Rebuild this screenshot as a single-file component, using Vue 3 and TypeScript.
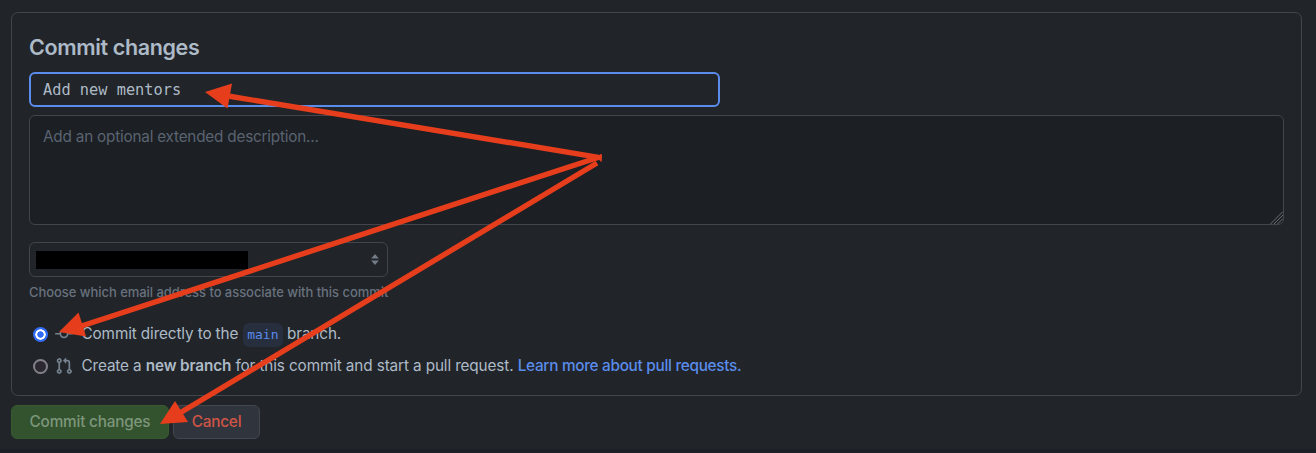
<script setup lang="ts">
import { ref } from 'vue'

interface Arrow {
  line: [number, number, number, number]
  head: string
}

const message = ref<string>('Add new mentors')
const description = ref<string>('')
const target = ref<string>('direct')

const arrows: Arrow[] = [
  { line: [601.5, 157.8, 228, 96], head: '205,92 232,83.5 227.5,108.5' },
  { line: [598, 157.5, 80, 326.5], head: '59,332 78.5,312.5 86,336.5' },
  { line: [597, 163, 179, 413.5], head: '160,424 175,401 188,422' },
]
</script>

<template>
  <main class="page">
    <section class="panel">
      <h3 class="title">Commit changes</h3>
      <input v-model="message" class="summary" type="text" spellcheck="false" />
      <div class="field">
        <textarea
          v-model="description"
          class="description"
          placeholder="Add an optional extended description..."
        ></textarea>
        <svg class="grip" viewBox="0 0 13 13" width="13" height="13">
          <path d="M.5 13 13 .5M4 13l9-9M7.5 13 13 7.5M11 13l2-2" stroke="#77797c" stroke-width=".9" />
        </svg>
      </div>
      <div class="email">
        <span class="redacted"></span>
        <svg class="sorter" viewBox="0 0 8 11" width="8" height="11">
          <path d="M4 0 7.9 4.6H.1zM4 11 .1 6.4h7.8z" fill="#717a87" />
        </svg>
      </div>
      <p class="note">Choose which email address to associate with this commit</p>
      <label class="choice first">
        <input v-model="target" type="radio" value="direct" name="target" />
        <svg class="icon" viewBox="0 0 16 16" width="18" height="18" fill="#768390">
          <path
            fill-rule="evenodd"
            d="M10.5 7.75a2.5 2.5 0 1 1-5 0 2.5 2.5 0 0 1 5 0zm1.43.75a4.002 4.002 0 0 1-7.86 0H.75a.75.75 0 1 1 0-1.5h3.32a4.001 4.001 0 0 1 7.86 0h3.32a.75.75 0 1 1 0 1.5z"
          />
        </svg>
        <span>Commit directly to the <code>main</code> branch.</span>
      </label>
      <label class="choice second">
        <input v-model="target" type="radio" value="pull" name="target" />
        <svg class="icon" viewBox="0 0 16 16" width="18" height="18" fill="#768390">
          <path
            fill-rule="evenodd"
            d="M7.177 3.073 9.573.677A.25.25 0 0 1 10 .854v4.792a.25.25 0 0 1-.427.177L7.177 3.427a.25.25 0 0 1 0-.354zM3.75 2.5a.75.75 0 1 0 0 1.5.75.75 0 0 0 0-1.5zm-2.25.75a2.25 2.25 0 1 1 3 2.122v5.256a2.251 2.251 0 1 1-1.5 0V5.372A2.25 2.25 0 0 1 1.5 3.25zM11 2.5h-1V4h1a1 1 0 0 1 1 1v5.628a2.251 2.251 0 1 0 1.5 0V5A2.5 2.5 0 0 0 11 2.5zm1 10.25a.75.75 0 1 1 1.5 0 .75.75 0 0 1-1.5 0zM3.75 12a.75.75 0 1 0 0 1.5.75.75 0 0 0 0-1.5z"
          />
        </svg>
        <span>Create a <b>new branch</b> for this commit and start a pull request. <a>Learn more about pull requests.</a></span>
      </label>
    </section>
    <div class="actions">
      <button class="commit" type="button">Commit changes</button>
      <button class="cancel" type="button">Cancel</button>
    </div>
    <svg class="arrows" viewBox="0 0 1316 453" width="1316" height="453">
      <g v-for="arrow in arrows" :key="arrow.head" fill="#e63e1c" stroke="#e63e1c">
        <line
          :x1="arrow.line[0]"
          :y1="arrow.line[1]"
          :x2="arrow.line[2]"
          :y2="arrow.line[3]"
          stroke-width="5.4"
        />
        <polygon :points="arrow.head" stroke="none" />
      </g>
      <path d="M601 154v7.5" stroke="#e63e1c" stroke-width="1.6" />
    </svg>
  </main>
</template>

<style>
body {
  background: #212428;
}
</style>

<style scoped>
* {
  box-sizing: border-box;
}
.page {
  position: relative;
  width: 1316px;
  height: 453px;
  padding: 12px 14px 0 11px;
  overflow: hidden;
  background: #212428;
  border-bottom: 4px solid #1e2027;
  color: #adbac7;
  font-family: Inter, 'Liberation Sans', sans-serif;
}
.panel {
  display: flex;
  flex-direction: column;
  align-items: flex-start;
  width: 1291px;
  height: 384px;
  padding: 0 17px;
  border: 1px solid #42464c;
  border-radius: 7px;
}
.title {
  height: 59px;
  margin: 0;
  padding-top: 20px;
  font-size: 21.5px;
  font-weight: 600;
  letter-spacing: -0.36px;
  line-height: 28px;
}
.summary {
  width: 691px;
  height: 35px;
  padding: 0 12px;
  border: 2px solid #5a8cec;
  border-radius: 6px;
  outline: none;
  background: #212428;
  color: #adbac7;
  font: 15.3px 'DejaVu Sans Mono', monospace;
}
.field {
  position: relative;
  flex: none;
  height: 110px;
  margin-top: 8px;
}
.description {
  display: block;
  width: 1255px;
  height: 110px;
  padding: 10px 13px;
  border: 1px solid #42464c;
  border-radius: 6px;
  outline: none;
  resize: none;
  background: #1c1f23;
  font: 15.3px/22px Inter, sans-serif;
  letter-spacing: -0.21px;
}
.description::placeholder {
  color: #5a6472;
  opacity: 1;
}
.grip {
  position: absolute;
  right: 1px;
  bottom: 1px;
  border-bottom-right-radius: 5px;
}
.email {
  display: flex;
  align-items: center;
  justify-content: space-between;
  width: 359px;
  height: 35px;
  margin-top: 17px;
  padding: 0 8px 0 6px;
  border: 1px solid #42464c;
  border-radius: 6px;
}
.redacted {
  width: 212px;
  height: 18px;
  background: #000;
}
.note {
  margin: 6px 0 0;
  color: #68727f;
  font-size: 13px;
  font-weight: 500;
  letter-spacing: -0.05px;
  line-height: 18px;
  white-space: nowrap;
}
.choice {
  display: flex;
  align-items: center;
  height: 24px;
  font-size: 15.3px;
  letter-spacing: -0.12px;
  line-height: 24px;
  white-space: nowrap;
}
.choice span {
  padding-left: 0.5px;
}
.first {
  margin-top: 21px;
}
.second {
  margin-top: 8px;
}
.second span {
  margin-top: -1px;
}
.choice input {
  appearance: none;
  width: 15px;
  height: 15px;
  margin: 0 7px 0 4px;
  border: 2px solid #84808b;
  border-radius: 50%;
  background: #2b292f;
}
.choice input:checked {
  border: none;
  background: radial-gradient(circle, #316cf4 0 2.9px, #fff 3.5px 4.9px, #316cf4 5.5px);
}
.icon {
  margin-right: 8px;
}
code {
  margin-left: 0.5px;
  padding: 4px 4.3px 5px;
  border-radius: 6px;
  background: #272e3e;
  color: #5a8cec;
  font: 13px/1 'DejaVu Sans Mono', monospace;
  letter-spacing: 0;
}
b {
  font-weight: 600;
}
a {
  color: #5a8cec;
  font-weight: 500;
  letter-spacing: -0.27px;
}
.actions {
  display: flex;
  gap: 4px;
  margin-top: 9px;
}
button {
  height: 34px;
  padding: 0 0 1px;
  border: 1px solid #37592f;
  border-radius: 6px;
  font: 500 15.3px Inter, sans-serif;
  letter-spacing: -0.18px;
}
.commit {
  width: 158px;
  background: #33522e;
  color: #7d967b;
}
.cancel {
  width: 87px;
  border-color: #42464f;
  background: #30343d;
  color: #d15446;
}
.arrows {
  position: absolute;
  inset: 0;
  pointer-events: none;
}
</style>
